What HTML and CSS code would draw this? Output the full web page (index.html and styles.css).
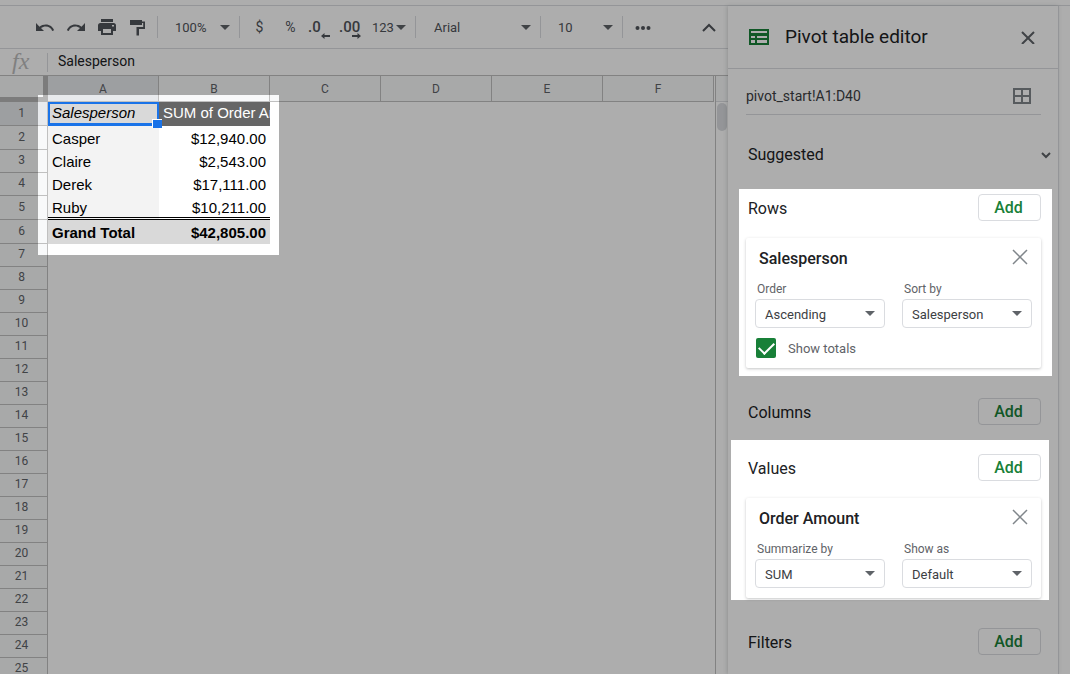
FILE: index.html
```html
<!DOCTYPE html>
<html lang="en">
<head>
<meta charset="utf-8">
<title>Pivot table editor</title>
<link rel="stylesheet" href="styles.css">
</head>
<body>
<div class="topstrip"></div>
<div class="app">
  <main class="workspace">
    <div class="toolbar" role="toolbar" aria-label="Formatting">
      <div class="group">
        <button class="tool" aria-label="Undo"><svg width="20" height="20" viewBox="0 0 20 20"><path d="M1 6v8h8L6 11.100c1.300-1 3-1.600 4.800-1.600 3 0 5.400 1.800 6.400 4.400l1.900-.6C17.900 9.800 14.700 7.500 10.800 7.500 8.400 7.500 6.200 8.300 4.500 9.700z"/></svg></button>
        <button class="tool" aria-label="Redo"><svg width="20" height="20" viewBox="0 0 20 20"><path d="M19 6v8h-8l3-2.900C12.700 10.100 11 9.500 9.200 9.500c-3 0-5.400 1.800-6.400 4.400l-1.900-.6C2.100 9.800 5.300 7.500 9.200 7.500c2.400 0 4.600.8 6.300 2.200z"/></svg></button>
        <button class="tool" aria-label="Print"><svg width="20" height="20" viewBox="0 0 20 20"><path d="M4 2h12v3H4zM3.500 6h13A2.500 2.500 0 0 1 19 8.500V14h-3v4H4v-4H1V8.500A2.500 2.500 0 0 1 3.500 6zM6 12v4h8v-4zM15 8v1.500h2V8z" fill-rule="evenodd"/></svg></button>
        <button class="tool" aria-label="Paint format"><svg width="20" height="20" viewBox="0 0 20 20"><path d="M2 3h12v1.500h3V12h-6v6.500H8.500V10h6.700V6H14v2H2z"/></svg></button>
      </div>
      <span class="sep"></span>
      <label class="drop drop-zoom"><select aria-label="Zoom"><option>100%</option></select></label>
      <span class="sep"></span>
      <div class="group">
        <button class="tool" aria-label="Currency">$</button>
        <button class="tool" aria-label="Percent">%</button>
        <button class="tool decimal" aria-label="Decrease decimal places"><span>.0</span><svg width="10" height="6" viewBox="0 0 10 6"><path d="M0 3l3.500-3v2H9v2H3.500v2z"/></svg></button>
        <button class="tool decimal" aria-label="Increase decimal places"><span>.00</span><svg width="10" height="6" viewBox="0 0 10 6"><path d="M9 3L5.500 0v2H0v2h5.500v2z"/></svg></button>
      </div>
      <label class="drop drop-format"><select aria-label="Number format"><option>123</option></select></label>
      <span class="sep"></span>
      <label class="drop drop-font"><select aria-label="Font"><option>Arial</option></select></label>
      <span class="sep"></span>
      <label class="drop drop-size"><select aria-label="Font size"><option>10</option></select></label>
      <span class="sep"></span>
      <div class="group">
        <button class="tool" aria-label="More"><svg width="20" height="20" viewBox="0 0 20 20"><circle cx="4.500" cy="11" r="2"/><circle cx="10" cy="11" r="2"/><circle cx="15.500" cy="11" r="2"/></svg></button>
      </div>
      <button class="tool collapse" aria-label="Hide menus"><svg width="20" height="20" viewBox="0 0 20 20"><path class="stroke-bold" d="M4 14l6-6 6 6"/></svg></button>
    </div>
    <div class="formula">
      <span class="fx">fx</span>
      <input class="formula-input" aria-label="Formula" value="Salesperson">
    </div>
    <div class="sheet">
      <div class="grid">
        <table>
          <thead>
            <tr><td class="corner"></td><th class="active">A</th><th>B</th><th>C</th><th>D</th><th>E</th><th>F</th></tr>
          </thead>
          <tbody>
            <tr class="tall head-row"><th class="active">1</th><td class="selected">Salesperson</td><td class="measure">SUM of Order Amount</td></tr>
            <tr class="tall"><th>2</th><td class="name">Casper</td><td class="num">$12,940.00</td></tr>
            <tr><th>3</th><td class="name">Claire</td><td class="num">$2,543.00</td></tr>
            <tr><th>4</th><td class="name">Derek</td><td class="num">$17,111.00</td></tr>
            <tr class="tall last"><th>5</th><td class="name">Ruby</td><td class="num">$10,211.00</td></tr>
            <tr class="tall total"><th>6</th><td>Grand Total</td><td class="num">$42,805.00</td></tr>
            <tr><th>7</th></tr><tr><th>8</th></tr><tr><th>9</th></tr><tr><th>10</th></tr>
            <tr><th>11</th></tr><tr><th>12</th></tr><tr><th>13</th></tr><tr><th>14</th></tr>
            <tr><th>15</th></tr><tr><th>16</th></tr><tr><th>17</th></tr><tr><th>18</th></tr>
            <tr><th>19</th></tr><tr><th>20</th></tr><tr><th>21</th></tr><tr><th>22</th></tr>
            <tr><th>23</th></tr><tr><th>24</th></tr><tr><th>25</th></tr>
          </tbody>
        </table>
      </div>
      <div class="scroll"><div class="scroll-top"></div><div class="thumb"></div></div>
    </div>
  </main>

  <aside class="panel">
    <header class="panel-head">
      <svg class="pivot-icon" width="20" height="16" viewBox="0 0 20 16"><path fill-rule="evenodd" d="M0 0h20v16H0zM2 2v2h16V2zM2 7v2h4V7zM8 7v2h10V7zM2 11v3h4v-3zM8 11v3h10v-3z"/></svg>
      <h1>Pivot table editor</h1>
      <button class="close" aria-label="Close"><svg width="14" height="14" viewBox="0 0 14 14"><path class="stroke" d="M1 2l12 12M13 2L1 14"/></svg></button>
    </header>
    <div class="panel-body">
      <div class="range">
        <input aria-label="Data range" value="pivot_start!A1:D40">
        <button aria-label="Select data range"><svg width="18" height="16" viewBox="0 0 18 16"><path class="stroke-grid" d="M1 1h16v14H1zM9 1v14M1 8h16"/></svg></button>
      </div>
      <div class="section-head suggested">
        <h2>Suggested</h2>
        <button aria-label="Expand suggestions"><svg width="12" height="8" viewBox="0 0 12 8"><path class="stroke" d="M2 2l4 4 4-4"/></svg></button>
      </div>

      <div class="section-head"><h2>Rows</h2><button class="add">Add</button></div>
      <section class="card">
        <div class="card-head"><h3>Salesperson</h3><button aria-label="Remove"><svg width="16" height="16" viewBox="0 0 16 16"><path class="stroke-light" d="M1 1l14 14M15 1L1 15"/></svg></button></div>
        <div class="fields">
          <div class="field"><label for="order">Order</label><div class="box"><select id="order"><option>Ascending</option></select></div></div>
          <div class="field"><label for="sort">Sort by</label><div class="box"><select id="sort"><option>Salesperson</option></select></div></div>
        </div>
        <label class="check"><input type="checkbox" checked><span>Show totals</span></label>
      </section>

      <div class="section-head"><h2>Columns</h2><button class="add">Add</button></div>

      <div class="section-head"><h2>Values</h2><button class="add">Add</button></div>
      <section class="card">
        <div class="card-head"><h3>Order Amount</h3><button aria-label="Remove"><svg width="16" height="16" viewBox="0 0 16 16"><path class="stroke-light" d="M1 1l14 14M15 1L1 15"/></svg></button></div>
        <div class="fields">
          <div class="field"><label for="summarize">Summarize by</label><div class="box"><select id="summarize"><option>SUM</option></select></div></div>
          <div class="field"><label for="show">Show as</label><div class="box"><select id="show"><option>Default</option></select></div></div>
        </div>
      </section>

      <div class="section-head"><h2>Filters</h2><button class="add">Add</button></div>
    </div>
  </aside>
  <div class="rail"></div>
</div>
<div class="scrim"></div>
</body>
</html>
```
FILE: styles.css
```css
* { box-sizing: border-box; }

body {
  margin: 0;
  height: 100vh;
  overflow: hidden;
  display: flex;
  flex-direction: column;
  background: #fff;
  color: #202124;
  font-family: Roboto, "Liberation Sans", sans-serif;
  font-size: 14px;
}

button, select, input {
  font: inherit;
  color: inherit;
  background: none;
  border: 0;
  padding: 0;
  margin: 0;
}
select { appearance: none; outline: 0; }
h1, h2, h3 { margin: 0; font-weight: 400; }
svg { display: block; fill: currentColor; }
.stroke, .stroke-bold, .stroke-light, .stroke-grid { fill: none; stroke: currentColor; stroke-width: 2; }
.stroke-light { stroke-width: 1.5; }

.topstrip { flex: none; height: 6px; border-bottom: 1px solid #dadce0; }
.app { flex: 1; min-height: 0; display: flex; }
.workspace { flex: 1; min-width: 0; display: flex; flex-direction: column; }

/* Toolbar */
.toolbar {
  flex: none;
  height: 43px;
  display: flex;
  align-items: center;
  padding-left: 25px;
  border-bottom: 1px solid #dadce0;
  color: #50545a;
  font-size: 13px;
}
.group { display: flex; padding: 0 4px; }
.tool { width: 31px; height: 28px; display: grid; place-items: center; font-size: 14px; }
.collapse { margin: 0 4px 0 auto; }
.sep { width: 1px; height: 22px; background: #dadce0; }
.decimal { font-size: 15px; font-weight: 500; line-height: 16px; align-content: center; justify-items: start; padding: 3px 0 0 2px; }
.decimal svg { justify-self: end; margin-right: 6px; }
.decimal span { height: 14px; }

.drop { display: grid; align-items: center; }
.drop select { grid-area: 1 / 1; width: 100%; }
.drop::after, .box::after {
  content: "";
  grid-area: 1 / 1;
  justify-self: end;
  margin-right: 9px;
  border: 5px solid transparent;
  border-top-color: #5f6368;
  border-bottom: 0;
  pointer-events: none;
}
.drop-zoom { width: 81px; }
.drop-zoom select, .drop-size select { padding-left: 17px; }
.drop-format { width: 43px; }
.drop-format select { padding-left: 0; }
.drop-font { width: 124px; }
.drop-font select { padding-left: 18px; }
.drop-size { width: 81px; }

/* Formula bar */
.formula { flex: none; height: 27px; display: flex; align-items: center; border-bottom: 1px solid #c0c0c0; }
.fx {
  width: 48px;
  padding: 0 0 3px 12px;
  border-right: 1px solid #dadce0;
  color: #bdbdbd;
  font: italic 24px/16px "Liberation Serif", serif;
}
.formula-input { flex: 1; min-width: 0; padding: 0 0 2px 10px; }

/* Sheet */
.sheet { flex: 1; min-height: 0; display: flex; }
.grid { flex: 1; min-width: 0; overflow: hidden; }
table { table-layout: fixed; width: 714px; border-collapse: separate; border-spacing: 0; }
th, td { padding: 0; }
th {
  background: #f8f9fa;
  color: #5f6368;
  font-size: 12px;
  font-weight: 400;
  line-height: 14px;
  border: 0 solid #c0c0c0;
  border-width: 0 1px 1px 0;
}
thead tr { height: 26px; }
tbody tr { height: 23px; }
tbody tr.tall { height: 24px; }
.corner { width: 48px; background: #f8f9fa; border-right: 5px solid #b7b7b7; border-bottom: 5px solid #b7b7b7; }
tbody th { padding: 0 4px 2px 0; }
th.active { background: #e8eaed; }
tbody td {
  padding: 0 4px;
  font: 15px/17px "Liberation Sans", Arial, sans-serif;
  color: #000;
  white-space: nowrap;
  overflow: hidden;
}
tbody .head-row td { padding-bottom: 4px; }
tbody .head-row .selected { background: #d9d9d9; border: 2px solid #1a73e8; border-bottom-width: 3px; padding: 0 2px 2px; font-style: italic; position: relative; overflow: visible; }
.selected::after {
  content: "";
  position: absolute;
  right: -5px;
  bottom: -5px;
  width: 9px;
  height: 8px;
  background: #1a73e8;
  border: solid #fff;
  border-width: 1px 0 0 1px;
}
.measure { background: #666; color: #fff; }
tbody .name { background: #f3f3f3; }
tbody .num { text-align: right; }
tbody .last td { border-bottom: 3px double #000; padding-top: 2px; }
.total td { background: #d9d9d9; font-weight: 700; }

.scroll { width: 13px; border-left: 1px solid #c0c0c0; }
.scroll-top { height: 26px; border-bottom: 1px solid #dadce0; background: #f8f9fa; }
.thumb { width: 10px; height: 28px; margin: 1px; border-radius: 5px; background: #dadce0; }

/* Side panel */
.panel {
  width: 331px;
  flex: none;
  display: flex;
  flex-direction: column;
  background: #fff;
  border-right: 1px solid #dadce0;
  box-shadow: -1px 0 4px rgba(60, 64, 67, .2);
}
.panel-head { flex: none; height: 63px; display: flex; align-items: center; padding: 0 23px 0 21px; border-bottom: 1px solid #dadce0; }
.pivot-icon { color: #188038; }
.panel-head h1 { flex: 1; padding-left: 16px; font-size: 19px; line-height: 24px; }
.close { color: #5f6368; }
.panel-body { flex: 1; min-height: 0; padding: 0 17px 0 18px; overflow: hidden; }
.range { height: 46px; padding: 9px 10px 0 0; display: flex; align-items: center; border-bottom: 1px solid #dadce0; color: #3c4043; }
.range input { flex: 1; min-width: 0; }
.range button { color: #80868b; }

.section-head { display: flex; justify-content: space-between; align-items: flex-start; margin-top: 26px; padding-left: 2px; }
.section-head h2 { font-size: 16px; line-height: 30px; }
.section-head.suggested { align-items: center; margin-right: -11px; }
.suggested h2 { line-height: 27px; }
.suggested button { color: #5f6368; }
.add { width: 63px; height: 27px; padding: 0 2px 1px 0; border: 1px solid #dadce0; border-radius: 4px; color: #188038; font-size: 16px; font-weight: 500; }

.card { margin: 14px 0 30px; padding: 10px 9px; border-radius: 2px; background: #fff; box-shadow: 0 1px 3px rgba(60, 64, 67, .3); }
.card + .section-head { margin-top: 0; }
.card-head { display: flex; justify-content: space-between; align-items: flex-start; padding: 0 4px; }
.card-head h3 { font-size: 16px; font-weight: 500; line-height: 22px; }
.card-head button { color: #80868b; padding-top: 1px; }
.fields { display: grid; grid-template-columns: 1fr 1fr; gap: 17px; margin-top: 11px; }
.field label { display: block; padding: 0 2px 2px; color: #5f6368; font-size: 12px; line-height: 16px; }
.box { display: grid; align-items: center; height: 29px; border: 1px solid #dadce0; border-radius: 4px; color: #3c4043; font-size: 13px; }
.box select { grid-area: 1 / 1; width: 100%; padding: 2px 0 0 9px; }
.check { display: flex; align-items: center; gap: 12px; margin-top: 10px; padding-left: 1px; color: #5f6368; font-size: 13px; }
.check input { appearance: none; width: 20px; height: 20px; display: grid; place-items: center; border-radius: 2px; background: #188038; }
.check input::after {
  content: "";
  width: 7px;
  height: 13px;
  margin-bottom: 3px;
  border: solid #fff;
  border-width: 0 2px 2px 0;
  transform: rotate(45deg);
}
.rail { width: 11px; flex: none; }

/* Dimming layer with three openings: pivot output, Rows, Values */
.scrim {
  position: fixed;
  inset: 0;
  pointer-events: none;
  background: rgba(0, 0, 0, .32);
  clip-path: polygon(evenodd,
    0 0, 100% 0, 100% 100%, 0 100%, 0 0,
    38px 95px, 279px 95px, 279px 255px, 38px 255px, 38px 95px, 0 0,
    calc(100% - 331px) 189px, calc(100% - 18px) 189px, calc(100% - 18px) 376px, calc(100% - 331px) 376px, calc(100% - 331px) 189px, 0 0,
    calc(100% - 339px) 440px, calc(100% - 21px) 440px, calc(100% - 21px) 600px, calc(100% - 339px) 600px, calc(100% - 339px) 440px, 0 0);
}
```
